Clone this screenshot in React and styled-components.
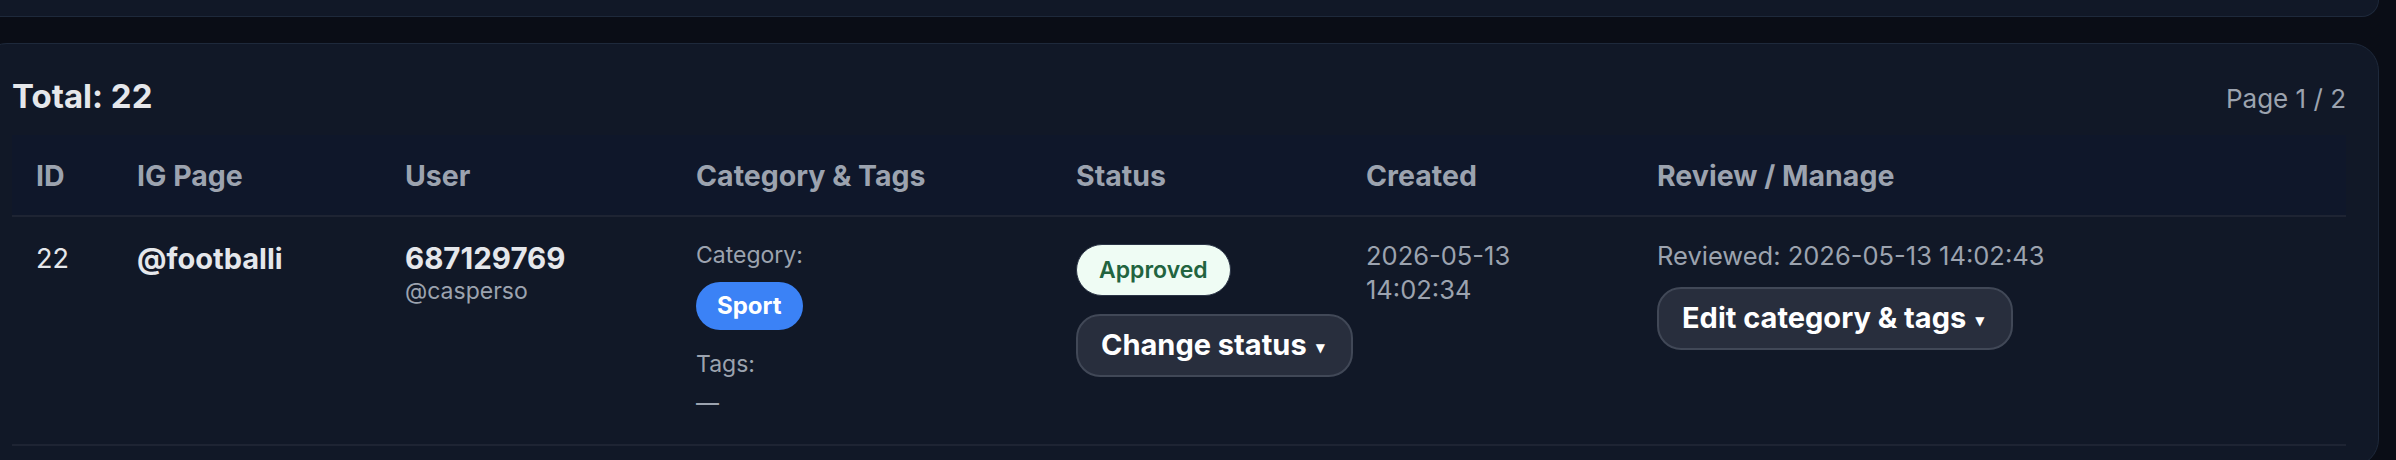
import React from "react";
import styled, { createGlobalStyle } from "styled-components";

const GlobalStyle = createGlobalStyle`
  html, body {
    margin: 0;
    padding: 0;
    background: #0a0d16;
    font-family: Inter, "Noto Sans", "Liberation Sans", sans-serif;
    -webkit-font-smoothing: antialiased;
  }
  * { box-sizing: border-box; }
`;

const Stack = styled.div`
  display: flex;
  flex-direction: column;
  gap: 26px;
  margin: 0 17px 0 -21px;
`;

const TopCard = styled.div`
  height: 17px;
  background: #111827;
  border: 1px solid #1e293b;
  border-top: none;
  border-radius: 0 0 28px 28px;
`;

const Card = styled.section`
  background: #111827;
  border: 1px solid #1e293b;
  border-radius: 28px;
  padding: 33px 32px 20px;
`;

const TopBar = styled.div`
  display: flex;
  justify-content: space-between;
  align-items: baseline;
  margin-bottom: 20px;
`;

const Total = styled.h2`
  margin: 0;
  font-size: 33px;
  line-height: 38px;
  font-weight: 700;
  color: #e5e7eb;
`;

const PageInfo = styled.span`
  font-size: 26px;
  color: #9ca3af;
`;

const Table = styled.table`
  width: 100%;
  border-collapse: collapse;
  table-layout: fixed;
`;

const Col = styled.col`
  width: ${(p) => (p.$w ? `${p.$w}px` : "auto")};
`;

const HeadRow = styled.tr`
  background: #0f172a;
`;

const Th = styled.th`
  text-align: left;
  padding: 24px 24px 22px;
  font-size: 28.5px;
  line-height: 34px;
  font-weight: 700;
  color: #9ca3af;
  border-bottom: 2px solid #1e2433;
  white-space: nowrap;
`;

const Td = styled.td`
  vertical-align: top;
  padding: 22px 24px 24px;
  font-size: ${(p) => (p.$bold ? 29 : 27)}px;
  line-height: 40px;
  color: #e5e7eb;
  border-bottom: 2px solid #1e2433;
  font-weight: ${(p) => (p.$bold ? 700 : 400)};
`;

const UserName = styled.div`
  font-size: 29.5px;
  font-weight: 700;
  line-height: 38px;
`;

const Handle = styled.div`
  font-size: 23px;
  line-height: 28px;
  color: #9ca3af;
`;

const Label = styled.div`
  font-size: 23px;
  line-height: 33px;
  color: #9ca3af;
  margin-top: ${(p) => p.$mt || 0}px;
`;

const Pill = styled.span`
  display: inline-flex;
  align-items: center;
  border-radius: 999px;
  font-size: ${(p) => (p.$tone === "approved" ? 23 : 24)}px;
  line-height: 32px;
  font-weight: ${(p) => (p.$tone === "approved" ? 600 : 700)};
  padding: ${(p) => (p.$tone === "approved" ? "9px 22px" : "8px 21px")};
  margin-top: ${(p) => p.$mt || 0}px;
  background: ${(p) => (p.$tone === "approved" ? "#effcf4" : "#3b82f6")};
  color: ${(p) => (p.$tone === "approved" ? "#22643f" : "#ffffff")};
  border: ${(p) => (p.$tone === "approved" ? "1px solid #2b3446" : "none")};
`;

const StatusCell = styled.div`
  display: flex;
  flex-direction: column;
  align-items: flex-start;
  gap: 18px;
  padding-top: 5px;
`;

const ActionButton = styled.button`
  display: inline-flex;
  align-items: center;
  gap: 9px;
  white-space: nowrap;
  font-family: inherit;
  font-size: 29px;
  line-height: 34px;
  font-weight: 700;
  color: #ffffff;
  background: #282e3d;
  border: 2px solid #414857;
  border-radius: 24px;
  padding: 12px 26px 13px 23px;
  margin-top: ${(p) => p.$mt || 0}px;
  cursor: pointer;
`;

const Caret = styled.span`
  font-family: "DejaVu Sans", sans-serif;
  font-size: 12px;
  line-height: 1;
  padding-top: 5px;
`;

const Muted = styled.div`
  font-size: 25.5px;
  line-height: 34px;
  color: #9ca3af;
`;

const Dash = styled.div`
  font-size: 23px;
  line-height: 33px;
  color: #9ca3af;
  margin-top: 6px;
`;

export default function App() {
  return (
    <>
      <GlobalStyle />
      <Stack>
        <TopCard />
        <Card>
          <TopBar>
            <Total>Total: 22</Total>
            <PageInfo>Page 1 / 2</PageInfo>
          </TopBar>
          <Table>
            <colgroup>
              <Col $w={101} />
              <Col $w={268} />
              <Col $w={291} />
              <Col $w={380} />
              <Col $w={290} />
              <Col $w={291} />
              <Col />
            </colgroup>
            <thead>
              <HeadRow>
                <Th>ID</Th>
                <Th>IG Page</Th>
                <Th>User</Th>
                <Th>Category &amp; Tags</Th>
                <Th>Status</Th>
                <Th>Created</Th>
                <Th>Review / Manage</Th>
              </HeadRow>
            </thead>
            <tbody>
              <tr>
                <Td>22</Td>
                <Td $bold>@footballi</Td>
                <Td>
                  <UserName>687129769</UserName>
                  <Handle>@casperso</Handle>
                </Td>
                <Td>
                  <Label>Category:</Label>
                  <Pill $mt={10}>Sport</Pill>
                  <Label $mt={18}>Tags:</Label>
                  <Dash>—</Dash>
                </Td>
                <Td>
                  <StatusCell>
                    <Pill $tone="approved">Approved</Pill>
                    <ActionButton>
                      Change status<Caret>▼</Caret>
                    </ActionButton>
                  </StatusCell>
                </Td>
                <Td>
                  <Muted>2026-05-13 14:02:34</Muted>
                </Td>
                <Td>
                  <Muted>Reviewed: 2026-05-13 14:02:43</Muted>
                  <ActionButton $mt={14}>
                    Edit category &amp; tags<Caret>▼</Caret>
                  </ActionButton>
                </Td>
              </tr>
            </tbody>
          </Table>
        </Card>
      </Stack>
    </>
  );
}
